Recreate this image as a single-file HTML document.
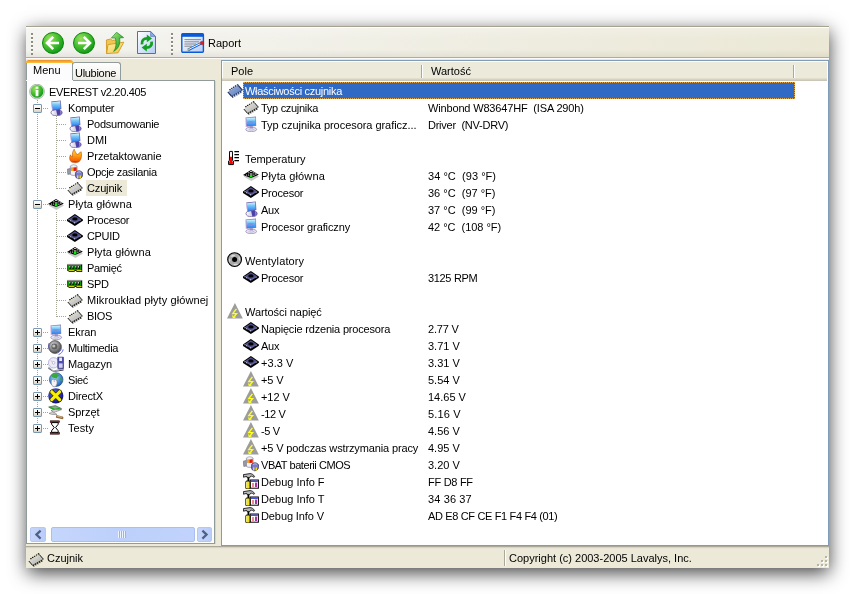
<!DOCTYPE html>
<html><head><meta charset="utf-8">
<style>
*{box-sizing:border-box}
html,body{margin:0;padding:0;width:855px;height:594px;overflow:hidden;background:#fff}
body{font-family:"Liberation Sans",sans-serif;font-size:11px;color:#000;position:relative}
.a{position:absolute}
.ic{overflow:visible}
#win{left:26px;top:26px;width:803px;height:542px;background:#ece9d8;box-shadow:0.5px 5px 17.5px rgba(0,0,0,.74)}
.t{white-space:pre;line-height:16px;height:16px;letter-spacing:-0.3px}
.r{white-space:pre;line-height:17px;height:17px;letter-spacing:-0.2px}
.dv{width:1px;height:1px}
</style></head><body>

<div id="win" class="a"></div>
<div class="a" style="left:0;top:0;width:855px;height:594px;will-change:transform">
<div class="a" style="left:26px;top:26px;width:803px;height:32px;border-top:1px solid #a7a392;border-bottom:1px solid #b0ac9a;background:linear-gradient(rgba(255,255,255,.25),rgba(255,255,255,0) 40%,rgba(0,0,0,0) 75%,rgba(120,110,80,.10)),linear-gradient(90deg,#f3f3f0 0%,#f2f1ea 30%,#eeecdf 65%,#ebe8d6 100%)"></div>
<div class="a" style="left:26px;top:27px;width:803px;height:1px;background:#fff"></div>
<div class="a" style="left:26px;top:58px;width:803px;height:1px;background:#fbfaf6"></div>
<div class="a" style="left:31px;top:33px;width:2px;height:22px;background:repeating-linear-gradient(#8f8b7e 0 2px,#fff 2px 3px,transparent 3px 4px)"></div>
<div class="a" style="left:171px;top:33px;width:2px;height:22px;background:repeating-linear-gradient(#8f8b7e 0 2px,#fff 2px 3px,transparent 3px 4px)"></div>
<div class="a t" style="left:208px;top:35px;letter-spacing:0">Raport</div>
<svg class="a ic" style="left:42px;top:32px" width="22" height="22"><use href="#back"/></svg>
<svg class="a ic" style="left:73px;top:32px" width="22" height="22"><use href="#fwd"/></svg>
<svg class="a ic" style="left:104px;top:32px" width="22" height="22"><use href="#folderup"/></svg>
<svg class="a ic" style="left:137px;top:31px" width="20" height="23"><use href="#refresh"/></svg>
<svg class="a ic" style="left:181px;top:33px" width="24" height="20"><use href="#report"/></svg>
<div class="a" style="left:72px;top:62px;width:49px;height:19px;border:1px solid #919b9c;border-bottom:none;border-radius:3px 3px 0 0;background:linear-gradient(#fefefe,#f4f3ee 70%,#e9e7dc)"></div>
<div class="a" style="left:26px;top:60px;width:47px;height:21px;background:#fcfcfe;border-left:1px solid #919b9c;border-right:1px solid #919b9c;border-radius:3px 3px 0 0;border-top:3px solid transparent"></div>
<div class="a" style="left:26px;top:60px;width:47px;height:3px;border-radius:3px 3px 0 0;background:linear-gradient(#e68b2c,#f8ad30 60%,#fcc43c)"></div>
<div class="a t" style="left:33px;top:62px;letter-spacing:0">Menu</div>
<div class="a t" style="left:75px;top:65px">Ulubione</div>
<div class="a" style="left:26px;top:80px;width:189px;height:464px;background:#fff;border:1px solid #919b9c"></div>
<div class="a" style="left:26px;top:80px;width:47px;height:1px;background:#fcfcfe"></div>
<div class="a" style="left:215px;top:81px;width:1px;height:463px;background:#d9d5c3"></div>
<div class="a" style="left:37px;top:100px;width:1px;height:328px;background:repeating-linear-gradient(#a5a597 0 1px,transparent 1px 2px)"></div>
<div class="a" style="left:56px;top:116px;width:1px;height:73px;background:repeating-linear-gradient(#a5a597 0 1px,transparent 1px 2px)"></div>
<div class="a" style="left:56px;top:212px;width:1px;height:105px;background:repeating-linear-gradient(#a5a597 0 1px,transparent 1px 2px)"></div>
<svg class="a ic" style="left:29px;top:84px" width="16" height="16"><use href="#info"/></svg>
<div class="a t" style="left:49px;top:84px;letter-spacing:-0.32px">EVEREST v2.20.405</div>
<div class="a" style="left:43px;top:108px;width:5px;height:1px;background:repeating-linear-gradient(90deg,#a5a597 0 1px,transparent 1px 2px)"></div>
<div class="a" style="left:33px;top:104px;width:9px;height:9px;border:1px solid #7a98af;border-radius:1px;background:linear-gradient(#fff,#f2f1ea 50%,#d7d2c0)"></div>
<div class="a" style="left:35px;top:108px;width:5px;height:1px;background:#000"></div>
<svg class="a ic" style="left:48px;top:100px" width="16" height="16"><use href="#comp"/></svg>
<div class="a t" style="left:68px;top:100px;letter-spacing:-0.17px">Komputer</div>
<div class="a" style="left:57px;top:124px;width:10px;height:1px;background:repeating-linear-gradient(90deg,#a5a597 0 1px,transparent 1px 2px)"></div>
<svg class="a ic" style="left:67px;top:116px" width="16" height="16"><use href="#comp"/></svg>
<div class="a t" style="left:87px;top:116px;letter-spacing:-0.25px">Podsumowanie</div>
<div class="a" style="left:57px;top:140px;width:10px;height:1px;background:repeating-linear-gradient(90deg,#a5a597 0 1px,transparent 1px 2px)"></div>
<svg class="a ic" style="left:67px;top:132px" width="16" height="16"><use href="#comp"/></svg>
<div class="a t" style="left:87px;top:132px;letter-spacing:0px">DMI</div>
<div class="a" style="left:57px;top:156px;width:10px;height:1px;background:repeating-linear-gradient(90deg,#a5a597 0 1px,transparent 1px 2px)"></div>
<svg class="a ic" style="left:67px;top:148px" width="16" height="16"><use href="#flame"/></svg>
<div class="a t" style="left:87px;top:148px;letter-spacing:-0.05px">Przetaktowanie</div>
<div class="a" style="left:57px;top:172px;width:10px;height:1px;background:repeating-linear-gradient(90deg,#a5a597 0 1px,transparent 1px 2px)"></div>
<svg class="a ic" style="left:67px;top:164px" width="16" height="16"><use href="#power"/></svg>
<div class="a t" style="left:87px;top:164px;letter-spacing:-0.32px">Opcje zasilania</div>
<div class="a" style="left:57px;top:188px;width:10px;height:1px;background:repeating-linear-gradient(90deg,#a5a597 0 1px,transparent 1px 2px)"></div>
<svg class="a ic" style="left:67px;top:180px" width="16" height="16"><use href="#chip"/></svg>
<div class="a" style="left:86px;top:180px;width:41px;height:16px;background:#ece9d8"></div>
<div class="a t" style="left:87px;top:180px;letter-spacing:-0.15px">Czujnik</div>
<div class="a" style="left:43px;top:204px;width:5px;height:1px;background:repeating-linear-gradient(90deg,#a5a597 0 1px,transparent 1px 2px)"></div>
<div class="a" style="left:33px;top:200px;width:9px;height:9px;border:1px solid #7a98af;border-radius:1px;background:linear-gradient(#fff,#f2f1ea 50%,#d7d2c0)"></div>
<div class="a" style="left:35px;top:204px;width:5px;height:1px;background:#000"></div>
<svg class="a ic" style="left:48px;top:196px" width="16" height="16"><use href="#mobo"/></svg>
<div class="a t" style="left:68px;top:196px;letter-spacing:0.13px">Płyta główna</div>
<div class="a" style="left:57px;top:220px;width:10px;height:1px;background:repeating-linear-gradient(90deg,#a5a597 0 1px,transparent 1px 2px)"></div>
<svg class="a ic" style="left:67px;top:212px" width="16" height="16"><use href="#cpu"/></svg>
<div class="a t" style="left:87px;top:212px;letter-spacing:-0.22px">Procesor</div>
<div class="a" style="left:57px;top:236px;width:10px;height:1px;background:repeating-linear-gradient(90deg,#a5a597 0 1px,transparent 1px 2px)"></div>
<svg class="a ic" style="left:67px;top:228px" width="16" height="16"><use href="#cpu"/></svg>
<div class="a t" style="left:87px;top:228px;letter-spacing:-0.35px">CPUID</div>
<div class="a" style="left:57px;top:252px;width:10px;height:1px;background:repeating-linear-gradient(90deg,#a5a597 0 1px,transparent 1px 2px)"></div>
<svg class="a ic" style="left:67px;top:244px" width="16" height="16"><use href="#mobo"/></svg>
<div class="a t" style="left:87px;top:244px;letter-spacing:0.13px">Płyta główna</div>
<div class="a" style="left:57px;top:268px;width:10px;height:1px;background:repeating-linear-gradient(90deg,#a5a597 0 1px,transparent 1px 2px)"></div>
<svg class="a ic" style="left:67px;top:260px" width="16" height="16"><use href="#ram"/></svg>
<div class="a t" style="left:87px;top:260px;letter-spacing:-0.35px">Pamięć</div>
<div class="a" style="left:57px;top:284px;width:10px;height:1px;background:repeating-linear-gradient(90deg,#a5a597 0 1px,transparent 1px 2px)"></div>
<svg class="a ic" style="left:67px;top:276px" width="16" height="16"><use href="#ram"/></svg>
<div class="a t" style="left:87px;top:276px;letter-spacing:-0.35px">SPD</div>
<div class="a" style="left:57px;top:300px;width:10px;height:1px;background:repeating-linear-gradient(90deg,#a5a597 0 1px,transparent 1px 2px)"></div>
<svg class="a ic" style="left:67px;top:292px" width="16" height="16"><use href="#chip"/></svg>
<div class="a t" style="left:87px;top:292px;letter-spacing:0.09px">Mikroukład płyty głównej</div>
<div class="a" style="left:57px;top:316px;width:10px;height:1px;background:repeating-linear-gradient(90deg,#a5a597 0 1px,transparent 1px 2px)"></div>
<svg class="a ic" style="left:67px;top:308px" width="16" height="16"><use href="#chip"/></svg>
<div class="a t" style="left:87px;top:308px;letter-spacing:-0.35px">BIOS</div>
<div class="a" style="left:43px;top:332px;width:5px;height:1px;background:repeating-linear-gradient(90deg,#a5a597 0 1px,transparent 1px 2px)"></div>
<div class="a" style="left:33px;top:328px;width:9px;height:9px;border:1px solid #7a98af;border-radius:1px;background:linear-gradient(#fff,#f2f1ea 50%,#d7d2c0)"></div>
<div class="a" style="left:35px;top:332px;width:5px;height:1px;background:#000"></div>
<div class="a" style="left:37px;top:330px;width:1px;height:5px;background:#000"></div>
<svg class="a ic" style="left:48px;top:324px" width="16" height="16"><use href="#disp"/></svg>
<div class="a t" style="left:68px;top:324px;letter-spacing:-0.08px">Ekran</div>
<div class="a" style="left:43px;top:348px;width:5px;height:1px;background:repeating-linear-gradient(90deg,#a5a597 0 1px,transparent 1px 2px)"></div>
<div class="a" style="left:33px;top:344px;width:9px;height:9px;border:1px solid #7a98af;border-radius:1px;background:linear-gradient(#fff,#f2f1ea 50%,#d7d2c0)"></div>
<div class="a" style="left:35px;top:348px;width:5px;height:1px;background:#000"></div>
<div class="a" style="left:37px;top:346px;width:1px;height:5px;background:#000"></div>
<svg class="a ic" style="left:48px;top:340px" width="16" height="16"><use href="#mm"/></svg>
<div class="a t" style="left:68px;top:340px;letter-spacing:-0.31px">Multimedia</div>
<div class="a" style="left:43px;top:364px;width:5px;height:1px;background:repeating-linear-gradient(90deg,#a5a597 0 1px,transparent 1px 2px)"></div>
<div class="a" style="left:33px;top:360px;width:9px;height:9px;border:1px solid #7a98af;border-radius:1px;background:linear-gradient(#fff,#f2f1ea 50%,#d7d2c0)"></div>
<div class="a" style="left:35px;top:364px;width:5px;height:1px;background:#000"></div>
<div class="a" style="left:37px;top:362px;width:1px;height:5px;background:#000"></div>
<svg class="a ic" style="left:48px;top:356px" width="16" height="16"><use href="#stor"/></svg>
<div class="a t" style="left:68px;top:356px;letter-spacing:-0.1px">Magazyn</div>
<div class="a" style="left:43px;top:380px;width:5px;height:1px;background:repeating-linear-gradient(90deg,#a5a597 0 1px,transparent 1px 2px)"></div>
<div class="a" style="left:33px;top:376px;width:9px;height:9px;border:1px solid #7a98af;border-radius:1px;background:linear-gradient(#fff,#f2f1ea 50%,#d7d2c0)"></div>
<div class="a" style="left:35px;top:380px;width:5px;height:1px;background:#000"></div>
<div class="a" style="left:37px;top:378px;width:1px;height:5px;background:#000"></div>
<svg class="a ic" style="left:48px;top:372px" width="16" height="16"><use href="#net"/></svg>
<div class="a t" style="left:68px;top:372px;letter-spacing:-0.35px">Sieć</div>
<div class="a" style="left:43px;top:396px;width:5px;height:1px;background:repeating-linear-gradient(90deg,#a5a597 0 1px,transparent 1px 2px)"></div>
<div class="a" style="left:33px;top:392px;width:9px;height:9px;border:1px solid #7a98af;border-radius:1px;background:linear-gradient(#fff,#f2f1ea 50%,#d7d2c0)"></div>
<div class="a" style="left:35px;top:396px;width:5px;height:1px;background:#000"></div>
<div class="a" style="left:37px;top:394px;width:1px;height:5px;background:#000"></div>
<svg class="a ic" style="left:48px;top:388px" width="16" height="16"><use href="#dx"/></svg>
<div class="a t" style="left:68px;top:388px;letter-spacing:-0.18px">DirectX</div>
<div class="a" style="left:43px;top:412px;width:5px;height:1px;background:repeating-linear-gradient(90deg,#a5a597 0 1px,transparent 1px 2px)"></div>
<div class="a" style="left:33px;top:408px;width:9px;height:9px;border:1px solid #7a98af;border-radius:1px;background:linear-gradient(#fff,#f2f1ea 50%,#d7d2c0)"></div>
<div class="a" style="left:35px;top:412px;width:5px;height:1px;background:#000"></div>
<div class="a" style="left:37px;top:410px;width:1px;height:5px;background:#000"></div>
<svg class="a ic" style="left:48px;top:404px" width="16" height="16"><use href="#tools"/></svg>
<div class="a t" style="left:68px;top:404px;letter-spacing:-0.05px">Sprzęt</div>
<div class="a" style="left:43px;top:428px;width:5px;height:1px;background:repeating-linear-gradient(90deg,#a5a597 0 1px,transparent 1px 2px)"></div>
<div class="a" style="left:33px;top:424px;width:9px;height:9px;border:1px solid #7a98af;border-radius:1px;background:linear-gradient(#fff,#f2f1ea 50%,#d7d2c0)"></div>
<div class="a" style="left:35px;top:428px;width:5px;height:1px;background:#000"></div>
<div class="a" style="left:37px;top:426px;width:1px;height:5px;background:#000"></div>
<svg class="a ic" style="left:48px;top:420px" width="16" height="16"><use href="#hour"/></svg>
<div class="a t" style="left:68px;top:420px;letter-spacing:0.08px">Testy</div>
<div class="a" style="left:27px;top:526px;width:187px;height:17px;background:#fefefa"></div>
<div class="a" style="left:30px;top:527px;width:16px;height:15px;border:1px solid #b5c8f3;border-radius:2px;background:linear-gradient(90deg,#c6d5fb,#b9cdfa)"></div>
<div class="a" style="left:197px;top:527px;width:15px;height:15px;border:1px solid #b5c8f3;border-radius:2px;background:linear-gradient(90deg,#c6d5fb,#b9cdfa)"></div>
<div class="a" style="left:51px;top:527px;width:144px;height:15px;border:1px solid #a8bef4;border-radius:2px;background:linear-gradient(90deg,#c5d6fc,#bcd0fb 50%,#c1d3fb)"></div>
<svg class="a" style="left:33px;top:529px" width="12" height="12"><path d="M7.6 1.6 L3.4 5.6 L7.6 9.6" stroke="#4d6185" stroke-width="2.2" fill="none"/></svg>
<svg class="a" style="left:199px;top:529px" width="12" height="12"><path d="M3.4 1.6 L7.6 5.6 L3.4 9.6" stroke="#4d6185" stroke-width="2.2" fill="none"/></svg>
<div class="a" style="left:118px;top:531px;width:1px;height:7px;background:#eef4fe"></div>
<div class="a" style="left:119px;top:531px;width:1px;height:7px;background:#9cb3e8"></div>
<div class="a" style="left:120px;top:531px;width:1px;height:7px;background:#eef4fe"></div>
<div class="a" style="left:121px;top:531px;width:1px;height:7px;background:#9cb3e8"></div>
<div class="a" style="left:122px;top:531px;width:1px;height:7px;background:#eef4fe"></div>
<div class="a" style="left:123px;top:531px;width:1px;height:7px;background:#9cb3e8"></div>
<div class="a" style="left:124px;top:531px;width:1px;height:7px;background:#eef4fe"></div>
<div class="a" style="left:125px;top:531px;width:1px;height:7px;background:#9cb3e8"></div>
<div class="a" style="left:221px;top:60px;width:608px;height:486px;background:#fff;border:1px solid #7f9db9"></div>
<div class="a" style="left:222px;top:61px;width:605px;height:20px;background:#ebeadb;border-top:1px solid #fff;border-left:1px solid #fff"></div>
<div class="a" style="left:222px;top:78px;width:605px;height:1px;background:#e2decd"></div>
<div class="a" style="left:222px;top:79px;width:605px;height:1px;background:#d6d2c2"></div>
<div class="a" style="left:222px;top:80px;width:605px;height:1px;background:#cbc7b8"></div>
<div class="a" style="left:421px;top:65px;width:1px;height:13px;background:#aca899"></div>
<div class="a" style="left:422px;top:65px;width:1px;height:13px;background:#fff"></div>
<div class="a" style="left:793px;top:65px;width:1px;height:13px;background:#aca899"></div>
<div class="a" style="left:794px;top:65px;width:1px;height:13px;background:#fff"></div>
<div class="a r" style="left:231px;top:63px;letter-spacing:0">Pole</div>
<div class="a r" style="left:431px;top:63px;letter-spacing:0">Wartość</div>
<div class="a" style="left:243px;top:82px;width:552px;height:17px;background:#316ac5;outline:1px dotted #e3a54c;outline-offset:-1px"></div>
<svg class="a ic" style="left:227px;top:82px" width="16" height="16"><use href="#chipsel"/></svg>
<div class="a r" style="left:245px;top:83px;color:#fff;letter-spacing:-0.28px">Właściwości czujnika</div>
<svg class="a ic" style="left:243px;top:99px" width="16" height="16"><use href="#chip"/></svg>
<div class="a r" style="left:261px;top:100px;color:#000;letter-spacing:-0.29px">Typ czujnika</div>
<div class="a r" style="left:428px;top:100px;letter-spacing:-0.16px">Winbond W83647HF  (ISA 290h)</div>
<svg class="a ic" style="left:243px;top:116px" width="16" height="16"><use href="#disp"/></svg>
<div class="a r" style="left:261px;top:117px;color:#000;letter-spacing:-0.05px">Typ czujnika procesora graficz...</div>
<div class="a r" style="left:428px;top:117px;letter-spacing:-0.25px">Driver  (NV-DRV)</div>
<svg class="a ic" style="left:227px;top:150px" width="16" height="16"><use href="#thermo"/></svg>
<div class="a r" style="left:245px;top:151px;color:#000;letter-spacing:-0.06px">Temperatury</div>
<svg class="a ic" style="left:243px;top:167px" width="16" height="16"><use href="#mobo"/></svg>
<div class="a r" style="left:261px;top:168px;color:#000;letter-spacing:0.13px">Płyta główna</div>
<div class="a r" style="left:428px;top:168px;letter-spacing:0.04px">34 °C  (93 °F)</div>
<svg class="a ic" style="left:243px;top:184px" width="16" height="16"><use href="#cpu"/></svg>
<div class="a r" style="left:261px;top:185px;color:#000;letter-spacing:-0.22px">Procesor</div>
<div class="a r" style="left:428px;top:185px;letter-spacing:0px">36 °C  (97 °F)</div>
<svg class="a ic" style="left:243px;top:201px" width="16" height="16"><use href="#comp"/></svg>
<div class="a r" style="left:261px;top:202px;color:#000;letter-spacing:-0.25px">Aux</div>
<div class="a r" style="left:428px;top:202px;letter-spacing:0px">37 °C  (99 °F)</div>
<svg class="a ic" style="left:243px;top:218px" width="16" height="16"><use href="#disp"/></svg>
<div class="a r" style="left:261px;top:219px;color:#000;letter-spacing:-0.11px">Procesor graficzny</div>
<div class="a r" style="left:428px;top:219px;letter-spacing:-0.03px">42 °C  (108 °F)</div>
<svg class="a ic" style="left:227px;top:252px" width="16" height="16"><use href="#fan"/></svg>
<div class="a r" style="left:245px;top:253px;color:#000;letter-spacing:0.12px">Wentylatory</div>
<svg class="a ic" style="left:243px;top:269px" width="16" height="16"><use href="#cpu"/></svg>
<div class="a r" style="left:261px;top:270px;color:#000;letter-spacing:-0.22px">Procesor</div>
<div class="a r" style="left:428px;top:270px;letter-spacing:-0.33px">3125 RPM</div>
<svg class="a ic" style="left:227px;top:303px" width="16" height="16"><use href="#warn"/></svg>
<div class="a r" style="left:245px;top:304px;color:#000;letter-spacing:-0.07px">Wartości napięć</div>
<svg class="a ic" style="left:243px;top:320px" width="16" height="16"><use href="#cpu"/></svg>
<div class="a r" style="left:261px;top:321px;color:#000;letter-spacing:-0.18px">Napięcie rdzenia procesora</div>
<div class="a r" style="left:428px;top:321px;letter-spacing:-0.17px">2.77 V</div>
<svg class="a ic" style="left:243px;top:337px" width="16" height="16"><use href="#cpu"/></svg>
<div class="a r" style="left:261px;top:338px;color:#000;letter-spacing:-0.25px">Aux</div>
<div class="a r" style="left:428px;top:338px;letter-spacing:0px">3.71 V</div>
<svg class="a ic" style="left:243px;top:354px" width="16" height="16"><use href="#cpu"/></svg>
<div class="a r" style="left:261px;top:355px;color:#000;letter-spacing:0.05px">+3.3 V</div>
<div class="a r" style="left:428px;top:355px;letter-spacing:0px">3.31 V</div>
<svg class="a ic" style="left:243px;top:371px" width="16" height="16"><use href="#warn"/></svg>
<div class="a r" style="left:261px;top:372px;color:#000;letter-spacing:-0.15px">+5 V</div>
<div class="a r" style="left:428px;top:372px;letter-spacing:0px">5.54 V</div>
<svg class="a ic" style="left:243px;top:388px" width="16" height="16"><use href="#warn"/></svg>
<div class="a r" style="left:261px;top:389px;color:#000;letter-spacing:-0.05px">+12 V</div>
<div class="a r" style="left:428px;top:389px;letter-spacing:0px">14.65 V</div>
<svg class="a ic" style="left:243px;top:405px" width="16" height="16"><use href="#warn"/></svg>
<div class="a r" style="left:261px;top:406px;color:#000;letter-spacing:-0.35px">-12 V</div>
<div class="a r" style="left:428px;top:406px;letter-spacing:0.15px">5.16 V</div>
<svg class="a ic" style="left:243px;top:422px" width="16" height="16"><use href="#warn"/></svg>
<div class="a r" style="left:261px;top:423px;color:#000;letter-spacing:-0.35px">-5 V</div>
<div class="a r" style="left:428px;top:423px;letter-spacing:0px">4.56 V</div>
<svg class="a ic" style="left:243px;top:439px" width="16" height="16"><use href="#warn"/></svg>
<div class="a r" style="left:261px;top:440px;color:#000;letter-spacing:-0.13px">+5 V podczas wstrzymania pracy</div>
<div class="a r" style="left:428px;top:440px;letter-spacing:0px">4.95 V</div>
<svg class="a ic" style="left:243px;top:456px" width="16" height="16"><use href="#power"/></svg>
<div class="a r" style="left:261px;top:457px;color:#000;letter-spacing:-0.45px">VBAT baterii CMOS</div>
<div class="a r" style="left:428px;top:457px;letter-spacing:0px">3.20 V</div>
<svg class="a ic" style="left:243px;top:473px" width="16" height="16"><use href="#debug"/></svg>
<div class="a r" style="left:261px;top:474px;color:#000;letter-spacing:0.0px">Debug Info F</div>
<div class="a r" style="left:428px;top:474px;letter-spacing:-0.28px">FF D8 FF</div>
<svg class="a ic" style="left:243px;top:490px" width="16" height="16"><use href="#debug"/></svg>
<div class="a r" style="left:261px;top:491px;color:#000;letter-spacing:0.0px">Debug Info T</div>
<div class="a r" style="left:428px;top:491px;letter-spacing:0.12px">34 36 37</div>
<svg class="a ic" style="left:243px;top:507px" width="16" height="16"><use href="#debug"/></svg>
<div class="a r" style="left:261px;top:508px;color:#000;letter-spacing:-0.1px">Debug Info V</div>
<div class="a r" style="left:428px;top:508px;letter-spacing:-0.35px">AD E8 CF CE F1 F4 F4 (01)</div>
<div class="a" style="left:26px;top:546px;width:803px;height:22px;background:linear-gradient(#aca899 0 1px,#d8d4c4 1px 2px,#e8e5d6 2px 3px,#ece9d8 3px)"></div>
<div class="a" style="left:504px;top:550px;width:1px;height:16px;background:#aca899"></div>
<div class="a" style="left:505px;top:550px;width:1px;height:16px;background:#fff"></div>
<svg class="a ic" style="left:28px;top:551px" width="16" height="16"><use href="#chip"/></svg>
<div class="a t" style="left:47px;top:550px;letter-spacing:0">Czujnik</div>
<div class="a t" style="left:509px;top:550px;letter-spacing:0">Copyright (c) 2003-2005 Lavalys, Inc.</div>
<div class="a" style="left:817px;top:564px;width:2px;height:2px;background:#b8b4a2;box-shadow:1px 1px 0 #fff"></div>
<div class="a" style="left:821px;top:564px;width:2px;height:2px;background:#b8b4a2;box-shadow:1px 1px 0 #fff"></div>
<div class="a" style="left:825px;top:564px;width:2px;height:2px;background:#b8b4a2;box-shadow:1px 1px 0 #fff"></div>
<div class="a" style="left:821px;top:560px;width:2px;height:2px;background:#b8b4a2;box-shadow:1px 1px 0 #fff"></div>
<div class="a" style="left:825px;top:560px;width:2px;height:2px;background:#b8b4a2;box-shadow:1px 1px 0 #fff"></div>
<div class="a" style="left:825px;top:556px;width:2px;height:2px;background:#b8b4a2;box-shadow:1px 1px 0 #fff"></div>
</div>
<svg width="0" height="0" style="position:absolute">
<defs>
<linearGradient id="gchip" x1="0" y1="0" x2="1" y2="1"><stop offset="0" stop-color="#f8f8f8"/><stop offset=".5" stop-color="#c8c8c8"/><stop offset="1" stop-color="#b0b0b0"/></linearGradient>
<linearGradient id="gchips" x1="0" y1="0" x2="1" y2="1"><stop offset="0" stop-color="#9ab4e0"/><stop offset="1" stop-color="#5a7ab8"/></linearGradient>
<linearGradient id="gscr" x1="0" y1="0" x2="0" y2="1"><stop offset="0" stop-color="#d8f8ff"/><stop offset=".35" stop-color="#7ccaf8"/><stop offset="1" stop-color="#2a7ef0"/></linearGradient>
<linearGradient id="gbase" x1="0" y1="0" x2="1" y2="0"><stop offset="0" stop-color="#ffffff"/><stop offset=".6" stop-color="#c8c4e0"/><stop offset="1" stop-color="#7a6ab8"/></linearGradient>
<linearGradient id="gflame" x1="0" y1="0" x2="0" y2="1"><stop offset="0" stop-color="#ffe020"/><stop offset=".5" stop-color="#ff9a10"/><stop offset="1" stop-color="#f04a00"/></linearGradient>
<linearGradient id="gcpu" x1="0" y1="0" x2="1" y2="1"><stop offset="0" stop-color="#8a8ab8"/><stop offset="1" stop-color="#3a3a6a"/></linearGradient>
<radialGradient id="ggreen" cx=".35" cy=".3" r=".75"><stop offset="0" stop-color="#9ae060"/><stop offset=".5" stop-color="#4ac030"/><stop offset="1" stop-color="#10951a"/></radialGradient>
<radialGradient id="gglobe" cx=".4" cy=".35" r=".7"><stop offset="0" stop-color="#9ad8ff"/><stop offset="1" stop-color="#1a5ab8"/></radialGradient>
<radialGradient id="gdx" cx=".4" cy=".35" r=".7"><stop offset="0" stop-color="#5a6af0"/><stop offset="1" stop-color="#0a0a70"/></radialGradient>
<radialGradient id="gspk" cx=".4" cy=".35" r=".7"><stop offset="0" stop-color="#e0e0e0"/><stop offset="1" stop-color="#404040"/></radialGradient>
<linearGradient id="gdoc" x1="0" y1="0" x2="1" y2="1"><stop offset="0" stop-color="#ffffff"/><stop offset="1" stop-color="#b4ccf4"/></linearGradient>
<linearGradient id="gfold" x1="0" y1="0" x2="1" y2="1"><stop offset="0" stop-color="#fff4b0"/><stop offset="1" stop-color="#f0c040"/></linearGradient>
<linearGradient id="garr" x1="0" y1="0" x2="1" y2="1"><stop offset="0" stop-color="#a0f080"/><stop offset="1" stop-color="#108a10"/></linearGradient>

<symbol id="chip" viewBox="0 0 16 16">
 <path d="M0.8 10 L11.2 3.4 L15.4 8.2 L4.6 14.4 Z" fill="url(#gchip)"/>
 <path d="M11.2 3.4 L15.4 8.2" stroke="#000" stroke-width=".9"/>
 <path d="M0.8 10 L4.6 14.4" stroke="#000" stroke-width=".9"/>
 <path d="M4.6 14.4 L15.4 8.2" stroke="#000" stroke-width=".6"/>
 <path d="M2.3 8 l1.2 -.75 M4.2 6.8 l1.2 -.75 M6.1 5.6 l1.2 -.75 M8 4.4 l1.2 -.75 M9.9 3.3 l1.3 -.8" stroke="#000" stroke-width="1.1"/>
 <path d="M5.6 13.8 l.3 1.8 M7.6 12.6 l.3 1.8 M9.6 11.5 l.3 1.8 M11.6 10.3 l.3 1.8 M13.6 9.2 l.3 1.8" stroke="#000" stroke-width="1"/>
 <path d="M2.8 9 l.8 -.5 M4.7 7.8 l.8 -.5 M6.6 6.6 l.8 -.5 M8.5 5.4 l.8 -.5 M10.4 4.3 l.8 -.5 M5.8 13 l.7 -.4 M7.8 11.8 l.7 -.4 M9.8 10.7 l.7 -.4 M11.8 9.5 l.7 -.4 M13.8 8.4 l.7 -.4" stroke="#b8b040" stroke-width=".7"/>
</symbol>
<symbol id="chipsel" viewBox="0 0 16 16">
 <path d="M0.8 10 L11.2 3.4 L15.4 8.2 L4.6 14.4 Z" fill="url(#gchips)"/>
 <path d="M11.2 3.4 L15.4 8.2" stroke="#14285a" stroke-width="1.1"/>
 <path d="M0.8 10 L4.6 14.4" stroke="#14285a" stroke-width="1.1"/>
 <path d="M4.6 14.4 L15.4 8.2" stroke="#14285a" stroke-width=".6"/>
 <path d="M2.3 8 l1.3 -.8 M4.2 6.8 l1.3 -.8 M6.1 5.6 l1.3 -.8 M8 4.4 l1.3 -.8 M9.9 3.3 l1.4 -.8" stroke="#14285a" stroke-width="1.3"/>
 <path d="M5.6 13.8 l.3 2 M7.6 12.6 l.3 2 M9.6 11.5 l.3 2 M11.6 10.3 l.3 2 M13.6 9.2 l.3 2" stroke="#14285a" stroke-width="1.1"/>
 <path d="M2.8 9 l.8 -.5 M4.7 7.8 l.8 -.5 M6.6 6.6 l.8 -.5 M8.5 5.4 l.8 -.5 M10.4 4.3 l.8 -.5 M5.8 13 l.7 -.4 M7.8 11.8 l.7 -.4 M9.8 10.7 l.7 -.4 M11.8 9.5 l.7 -.4 M13.8 8.4 l.7 -.4" stroke="#5070b0" stroke-width=".7"/>
</symbol>
<symbol id="comp" viewBox="0 0 16 16">
 <path d="M3 12.6 C3 10.6 5.4 9.6 8.6 9.6 C11.8 9.6 14.2 10.6 14.2 12.6 C14.2 14.6 11.8 15.8 8.6 15.8 C5.4 15.8 3 14.6 3 12.6 Z" fill="url(#gbase)" stroke="#5a4a98" stroke-width=".7"/>
 <path d="M8 9.6 L11.8 9 L12.4 14.6 L9.4 15.4 Z" fill="#4a40a8"/>
 <path d="M3.2 1.6 L12.8 0.6 L13.4 9 L4.2 10.8 Z" fill="#6a5aa8"/>
 <path d="M3.9 2.2 L12.2 1.3 L12.7 8.5 L4.6 10 Z" fill="url(#gscr)"/>
 <path d="M3.2 1.6 L3.9 2.2 L4.6 10 L4.2 10.8 Z" fill="#d8d0f0"/>
</symbol>
<symbol id="disp" viewBox="0 0 16 16">
 <ellipse cx="8.2" cy="13.4" rx="5.4" ry="2.3" fill="#e8e8f0" stroke="#8a80b8" stroke-width=".7"/>
 <path d="M5.6 13.4 C6.6 14.4 10 14.4 11.4 13.2" stroke="#b0a8d0" stroke-width=".8" fill="none"/>
 <path d="M6.8 10.2 L9.8 10.2 L10.2 12.6 L6.4 12.6 Z" fill="#9a90c8"/>
 <path d="M2.6 1.4 L13 0.6 L13.2 10 L3 10.8 Z" fill="#8a7ab8"/>
 <path d="M3.4 2.1 L12.4 1.4 L12.5 9.3 L3.7 9.9 Z" fill="url(#gscr)"/>
 <path d="M4 6 C6 4.8 9.5 4.8 12 5.8 C9.5 7 6 7.2 4 6 Z" fill="#a068c0" opacity=".5"/>
 <path d="M2.2 1.6 L3.2 1.4 L3.4 11 L2.6 11 Z" fill="#e8c8f0"/>
</symbol>
<symbol id="flame" viewBox="0 0 16 16">
 <path d="M4 13.6 C2.4 12 2.2 9.6 3.4 6.8 C4 8.4 4.8 9 5.4 9 C5 6 5.6 3.2 7.2 1.2 C7.8 3.6 9.4 5.6 10.6 7 C11.2 5.6 12.6 4.6 14.2 3.8 C14.8 7 14.6 10.6 13 12.8 C11.4 15 6.6 15.4 4 13.6 Z" fill="url(#gflame)" stroke="#a03000" stroke-width=".5"/>
 <path d="M4.6 12.8 C6 14.2 9.6 14.4 11.6 12.8 C9.6 13.4 6.4 13.4 4.6 12.8 Z" fill="#c02800" opacity=".8"/>
</symbol>
<symbol id="power" viewBox="0 0 16 16">
 <path d="M0.3 5.2 L4 4.2 L4.4 9.8 L0.8 10.4 Z" fill="#9a9aa4" stroke="#6a6a78" stroke-width=".6"/>
 <path d="M3.4 2.4 C3.4 0.6 10 0.6 10 2.4 L10 10 C10 11.8 3.4 11.8 3.4 10 Z" fill="#f2f2f6" stroke="#7a7a90" stroke-width=".7"/>
 <path d="M4 3.4 L9.6 3.2 L9.6 6.8 L4 7 Z" fill="#f8a020"/>
 <path d="M6.6 3.3 L9.6 3.2 L9.6 6.8 L6.6 6.9 Z" fill="#e01818"/>
 <ellipse cx="6.7" cy="2.2" rx="3" ry="1.1" fill="#fff" stroke="#9a9ab0" stroke-width=".5"/>
 <path d="M8.6 8.6 C9.6 6.4 13.8 6.2 15.4 8.6 C16.2 10.4 15.6 13.4 13.4 14.4 C11.6 15.2 9.2 14.6 8.6 12.6 Z" fill="#7a7ac8" stroke="#3a3a6a" stroke-width=".8"/>
 <path d="M10 8.6 C11 7.6 13 7.6 14 8.4" stroke="#c8c8f0" stroke-width=".8" fill="none"/>
 <path d="M10.8 11.4 L10.6 14.6 M13.4 11.4 L13.2 14.6" stroke="#f8d820" stroke-width="1.3"/>
</symbol>
<symbol id="mobo" viewBox="0 0 16 16">
 <path d="M0.6 9.4 L8 5.2 L16 9.6 L8.4 14 Z" fill="#8a8a8a" opacity=".45"/>
 <path d="M0 8 L8 3 L15.8 7.8 L8 11 Z" fill="#000"/>
 <path d="M7 4.2 H9.4 V5 H7 Z M5 5.4 H6.6 V6.2 H5 Z M9.8 5.4 H11.6 V6.2 H9.8 Z M7 6.6 H9.4 V7.4 H7 Z M12 6.6 H13.6 V7.4 H12 Z M9.8 7.8 H11.6 V8.6 H9.8 Z" fill="#fff"/>
 <circle cx="3.6" cy="8" r=".6" fill="#fff"/><circle cx="5.6" cy="8" r=".6" fill="#fff"/>
 <rect x="6.8" y="8" width="2.6" height="2.4" fill="#00f000"/>
</symbol>
<symbol id="cpu" viewBox="0 0 16 16">
 <path d="M-0.2 7.6 L7.9 1.9 L15.9 7.6 L15.9 8.8 L7.9 13.9 L-0.2 8.8 Z" fill="#000"/>
 <path d="M1.4 7.6 L7.9 3.2 L14.4 7.6 L7.9 11.8 Z" fill="#50508a"/>
 <path d="M3 8.2 L7.9 10.8 L12.8 8" stroke="#6a6aa8" stroke-width=".7" fill="none"/>
 <ellipse cx="7.9" cy="6.9" rx="2.7" ry="1.6" fill="#000"/>
 <circle cx="1.9" cy="7.8" r=".55" fill="#e0e0ea"/><circle cx="3.6" cy="8.7" r=".55" fill="#e0e0ea"/><circle cx="7.5" cy="10.8" r=".55" fill="#e0e0ea"/><circle cx="13.2" cy="8.2" r=".5" fill="#b8b8d0"/>
</symbol>
<symbol id="ram" viewBox="0 0 16 16">
 <path d="M0.3 4.3 H15.2 V12 H9.4 V11 H7.6 V12 H1.6 V11 H0.3 Z" fill="#000"/>
 <rect x="1" y="4.6" width="13.2" height="5.6" fill="#009a00"/>
 <path d="M0.3 4.3 H14.6" stroke="#c8b0c0" stroke-width=".8"/>
 <rect x="2.4" y="6" width="1.8" height="2.8" fill="#000"/><rect x="5.4" y="6" width="1.8" height="2.8" fill="#000"/><rect x="8.4" y="6" width="1.8" height="2.8" fill="#000"/><rect x="11.2" y="6" width="1.8" height="2.8" fill="#000"/>
 <rect x="2.4" y="6" width=".9" height="1.6" fill="#fff"/><rect x="5.4" y="6" width=".9" height="1.6" fill="#fff"/><rect x="8.4" y="6" width=".9" height="1.6" fill="#fff"/><rect x="11.2" y="6" width=".9" height="1.6" fill="#fff"/>
 <rect x="1.6" y="10.2" width="5.8" height="1" fill="#ffff00"/><rect x="9.6" y="10.2" width="5" height="1" fill="#ffff00"/>
</symbol>
<symbol id="mm" viewBox="0 0 16 16">
 <circle cx="7" cy="7" r="6.4" fill="url(#gspk)" stroke="#303030" stroke-width=".6"/>
 <circle cx="6.4" cy="6.6" r="3" fill="#606060"/>
 <circle cx="5.8" cy="6" r="1.6" fill="#c0c0c0"/>
 <path d="M1.2 3 C0 5 0.4 8.4 2 10" stroke="#5a5ab0" stroke-width=".9" fill="none"/>
 <path d="M10.5 14.6 C13 13.8 14.6 12 15.2 9.4 M9 12.8 C11.2 12.2 12.6 10.8 13.2 8.6" stroke="#6a6ae0" stroke-width="1" fill="none"/>
</symbol>
<symbol id="stor" viewBox="0 0 16 16">
 <path d="M0.4 11.6 L5.6 15.6 L15.6 13.2 L15.6 14.4 L5.6 16 L0.4 12.8 Z" fill="#404050"/>
 <path d="M0.4 10.4 L5.6 14.4 L15.6 12 L15.6 13.2 L5.6 15.6 L0.4 11.6 Z" fill="#9a9aa8"/>
 <circle cx="5.6" cy="6.8" r="5.2" fill="#ececf8" stroke="#a0a0c8" stroke-width=".7"/>
 <circle cx="5.6" cy="6.8" r="1.3" fill="#fff" stroke="#a898c0" stroke-width=".6"/>
 <path d="M2.6 4.4 L4.8 6" stroke="#e0a0d0" stroke-width=".8"/>
 <path d="M9.8 1.2 H15.4 V12.4 H9.8 Z" fill="#5050b0" stroke="#2a2a6a" stroke-width=".7"/>
 <rect x="11.2" y="1.6" width="2.8" height="3.4" fill="#e8e8f4"/>
 <rect x="10.8" y="7.4" width="3.8" height="4.4" fill="#d0d0ec"/>
</symbol>
<symbol id="net" viewBox="0 0 16 16">
 <circle cx="8.2" cy="7.6" r="6.8" fill="url(#gglobe)" stroke="#1a3a7a" stroke-width=".6"/>
 <path d="M5.4 1.6 C8.4 1.2 10.8 2.2 11.6 4 C10 4.2 9 5.2 8.6 6.6 C7 6.2 5 5.6 3.4 4.4 C3.8 3 4.6 2.2 5.4 1.6 Z M12.4 5.2 C13.6 5.6 14.6 7 14.8 8.4 C13.6 9 12.4 8.4 12.2 7 Z" fill="#3aa83a"/>
 <path d="M4.2 7.4 C6.4 6.8 8.6 7.6 9 9.6 C9.4 12 8.4 14.6 6.4 14.8 C4.4 15 3.2 12.8 3.2 10.4 C3.2 8.8 3.6 7.8 4.2 7.4 Z" fill="#f4f4f4" stroke="#7a7a8a" stroke-width=".6"/>
 <path d="M6 7.2 L6.4 10" stroke="#7a7a8a" stroke-width=".5"/>
</symbol>
<symbol id="dx" viewBox="0 0 16 16">
 <circle cx="7.8" cy="7.8" r="7.6" fill="url(#gdx)"/>
 <path d="M3.8 3.8 L11.6 11.6 M11.6 3.8 L3.8 11.6" stroke="#202000" stroke-width="4.2" stroke-linecap="round"/>
 <path d="M3.8 3.8 L11.6 11.6 M11.6 3.8 L3.8 11.6" stroke="#f8f000" stroke-width="3.2" stroke-linecap="round"/>
</symbol>
<symbol id="tools" viewBox="0 0 16 16">
 <path d="M0.6 3 L7.4 1.6 L13.6 4.6 L7 6.4 Z" fill="#8aa890" stroke="#4a5a4a" stroke-width=".6"/>
 <path d="M1.4 3.2 L7 5.6 L11.6 4.4" stroke="#10b010" stroke-width="1.4" fill="none"/>
 <path d="M3 6.6 C5 5.4 9 5 13.6 5.6 C11 6.6 8 7.4 6 8.4 Z" fill="#d8d8d8" stroke="#606060" stroke-width=".6"/>
 <path d="M1 9.4 C3 8.2 6 8.4 9 10.4 C6.6 10.8 3.6 10.6 1 9.4 Z" fill="#e4e4e4" stroke="#707070" stroke-width=".6"/>
 <path d="M8.6 11.6 L15 13 L14.8 14.8 L8.4 13.4 Z" fill="#d07a20" stroke="#5a3a10" stroke-width=".6"/>
 <path d="M9.2 12.2 L14.4 13.2" stroke="#f0e0c0" stroke-width=".6"/>
</symbol>
<symbol id="hour" viewBox="0 0 16 16">
 <rect x="2.2" y="0.8" width="9.4" height="1.8" fill="#e80000" stroke="#000" stroke-width=".5"/>
 <rect x="2.2" y="12.4" width="9.4" height="1.8" fill="#e80000" stroke="#000" stroke-width=".5"/>
 <path d="M3.6 2.6 L10.2 2.6 L10.2 4.2 L7.6 7.5 L10.2 10.8 L10.2 12.4 L3.6 12.4 L3.6 10.8 L6.2 7.5 L3.6 4.2 Z" fill="#fff" stroke="#000" stroke-width="1"/>
 <path d="M5.6 11.6 L8.2 11.6" stroke="#c0c0c0" stroke-width=".8"/>
</symbol>
<symbol id="thermo" viewBox="0 0 16 16">
 <path d="M2.6 1.4 L5.4 1.4 L5.6 10.6 L6.4 11 L6.4 14.6 L1.6 14.6 L1.6 11 L2.4 10.6 Z" fill="#fff" stroke="#000" stroke-width="1"/>
 <path d="M3 6.8 L5 6.8 L5.1 11.4 L5.9 11.6 L5.9 14 L2.1 14 L2.1 11.6 L2.9 11.4 Z" fill="#ff0000"/>
 <path d="M7.4 1.6 H12 M7.4 4.6 H12 M7.4 7.6 H12 M7.4 10.6 H12" stroke="#000" stroke-width="1.1"/>
</symbol>
<symbol id="fan" viewBox="0 0 16 16">
 <circle cx="7.6" cy="7.6" r="6.9" fill="#a8a8a8" stroke="#000" stroke-width="1.1"/>
 <path d="M3.4 4.6 C4.6 2.6 7 2.4 8.2 3.4 C7.4 4.4 5 5 3.4 4.6 Z M11.8 3.8 C13.2 5.4 13.4 7.6 12.6 9 C11.6 8 11.2 5.6 11.8 3.8 Z M11.2 12.2 C9.6 13.6 7 13.6 6 12.6 C7 11.8 9.4 11.4 11.2 12.2 Z M2.6 10.4 C1.8 8.8 2 7 2.8 6.2 C3.6 7.2 3.6 9 2.6 10.4 Z" fill="#dcdcdc"/>
 <circle cx="7.6" cy="7.6" r="2.5" fill="#000"/>
</symbol>
<symbol id="warn" viewBox="0 0 16 16">
 <path d="M7.9 0 L15.8 15.4 L0 15.4 Z" fill="#9c9c9c"/>
 <path d="M9.4 5.8 L5.8 10.6 L9.6 10.6 L6.6 14.4" stroke="#ffff20" stroke-width="1.4" fill="none" stroke-linejoin="miter"/>
 <path d="M5.6 12.4 L6.2 14.6 L8.6 14" stroke="#ffff20" stroke-width="1.2" fill="none"/>
</symbol>
<symbol id="debug" viewBox="0 0 16 16">
 <path d="M0.4 1.6 L7 0.6 C8.6 0.6 10.6 1.6 11.6 3.6 L11 4.4 C10 3.4 8.8 3 7.6 3.2 L6.8 4.6 L4 4.6 L3.8 3.4 L0.4 4.2 Z" fill="#b8b8b8" stroke="#000" stroke-width=".8"/>
 <path d="M5.4 4.6 L5.4 8" stroke="#000" stroke-width="1.8"/>
 <rect x="7.2" y="7" width="8.2" height="8.2" fill="#fff" stroke="#000" stroke-width="1"/>
 <rect x="7.8" y="7.6" width="7" height="1.2" fill="#1a2ad0"/>
 <path d="M10 10 V14 M12.6 9.6 V14" stroke="#e01030" stroke-width="1"/>
 <path d="M13.6 9.6 V14" stroke="#a020a0" stroke-width="1"/>
 <rect x="2.8" y="8" width="4.2" height="8" rx="1" fill="#f0e020" stroke="#000" stroke-width=".9"/>
 <path d="M3.6 9 V15" stroke="#fffaa0" stroke-width=".8"/>
</symbol>
<symbol id="info" viewBox="0 0 16 16">
 <circle cx="8" cy="7.6" r="7.4" fill="#e8f0e8" stroke="#8a9a8a" stroke-width=".7"/>
 <circle cx="8" cy="7.4" r="6.4" fill="url(#ggreen)"/>
 <rect x="6.6" y="6" width="2.8" height="6.2" fill="#fff"/>
 <rect x="6.6" y="2.6" width="2.8" height="2.2" fill="#fff"/>
</symbol>
<symbol id="back" viewBox="0 0 22 22">
 <circle cx="11" cy="11" r="10.5" fill="url(#ggreen)" stroke="#0a8a0a" stroke-width="1"/>
 <path d="M17 11 H5.5 M11.2 4.8 L5 11 L11.2 17.2" stroke="#fff" stroke-width="2.6" fill="none" stroke-linejoin="miter" stroke-linecap="butt"/>
</symbol>
<symbol id="fwd" viewBox="0 0 22 22">
 <circle cx="11" cy="11" r="10.5" fill="url(#ggreen)" stroke="#0a8a0a" stroke-width="1"/>
 <path d="M5 11 H16.5 M10.8 4.8 L17 11 L10.8 17.2" stroke="#fff" stroke-width="2.6" fill="none" stroke-linejoin="miter" stroke-linecap="butt"/>
</symbol>
<symbol id="folderup" viewBox="0 0 22 22">
 <path d="M2.4 8 L6.6 7 L8.2 8.4 L12.6 7.8 L13 12.4 L2.6 21.6 Z" fill="#f2c654" stroke="#d09a20" stroke-width=".9"/>
 <path d="M4 12.6 L19.8 10.2 L14 20.8 L2.6 21.6 Z" fill="url(#gfold)" stroke="#d09a20" stroke-width=".9"/>
 <path d="M9.6 19.4 C12.4 16 12.4 10.6 11.4 6 L7.4 6 L12.6 0.2 L19.6 5.6 L15.6 6 C16.6 11.6 14.6 16.6 9.6 19.4 Z" fill="url(#garr)" stroke="#0a7a0a" stroke-width=".6"/>
</symbol>
<symbol id="refresh" viewBox="0 0 20 23">
 <path d="M0.5 0.5 H13.6 L18.5 5.4 V22.5 H0.5 Z" fill="url(#gdoc)" stroke="#5a6ab0" stroke-width="1"/>
 <path d="M13.6 0.5 V5.4 H18.5 Z" fill="#7ab0f0" stroke="#5a6ab0" stroke-width=".6"/>
 <path d="M5 13.4 C4.4 9.6 6.6 7.2 10.6 7.4" stroke="#12a020" stroke-width="2.8" fill="none"/>
 <path d="M9.8 3.6 L15 7.6 L9.8 11.2 Z" fill="#12a020"/>
 <path d="M14.6 10.6 C15.2 14.4 13 16.8 9 16.6" stroke="#12a020" stroke-width="2.8" fill="none"/>
 <path d="M9.8 20.4 L4.6 16.4 L9.8 12.8 Z" fill="#12a020"/>
</symbol>
<symbol id="report" viewBox="0 0 24 20">
 <rect x="0.8" y="0.8" width="21.6" height="18.4" rx="1" fill="url(#gdoc)" stroke="#0a5ad8" stroke-width="1.4"/>
 <rect x="0.8" y="0.8" width="21.6" height="3" fill="#0a5ad8"/>
 <path d="M3.4 6.6 H20 M3.4 8.8 H18 M3.4 11 H15 M3.4 13.2 H11" stroke="#8a8a8a" stroke-width="1"/>
 <path d="M7 17 L20 10.4" stroke="#1a6ad8" stroke-width="2.6"/>
 <path d="M7.4 16.6 L19.8 10.4" stroke="#e8f0ff" stroke-width="1"/>
 <path d="M5.4 18 L7.6 15.2 L8.6 17 Z" fill="#e8b040"/>
 <circle cx="21" cy="10" r="1.8" fill="#e02020" stroke="#a01010" stroke-width=".4"/>
</symbol>
</defs></svg>

</body></html>
